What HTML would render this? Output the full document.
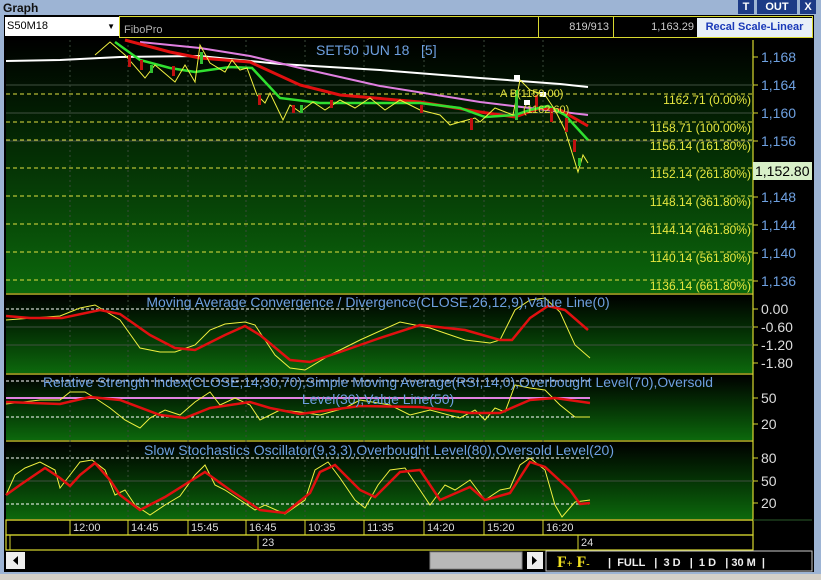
<!DOCTYPE html>
<html><head><meta charset="utf-8"><style>
*{margin:0;padding:0;box-sizing:border-box}
body{width:821px;height:580px;overflow:hidden;background:#d4d0c8;font-family:"Liberation Sans",sans-serif;position:relative}
.abs{position:absolute}
</style></head><body>
<div class="abs" style="left:0;top:0;width:821px;height:574px;background:#9db4d4"></div>
<div class="abs" style="left:3px;top:1px;font-size:12px;font-weight:bold;color:#111">Graph</div>
<div class="abs" style="left:738px;top:0;width:16px;height:14px;background:#1c3a86;color:#fff;font-size:11px;font-weight:bold;text-align:center;line-height:14px">T</div>
<div class="abs" style="left:757px;top:0;width:40px;height:14px;background:#1c3a86;color:#fff;font-size:11px;font-weight:bold;text-align:center;line-height:14px">OUT</div>
<div class="abs" style="left:800px;top:0;width:16px;height:14px;background:#1c3a86;color:#fff;font-size:11px;font-weight:bold;text-align:center;line-height:14px">X</div>
<div class="abs" style="left:4px;top:15px;width:810px;height:557px;background:#000"></div>
<div class="abs" style="left:5px;top:17px;width:114px;height:19px;background:#fff;font-size:11px;line-height:19px;padding-left:2px">S50M18<span style="position:absolute;right:4px;font-size:8px">▼</span></div>
<div class="abs" style="left:119px;top:16px;width:694px;height:22px;border:1px solid #d8d830;background:#000"></div>
<div class="abs" style="left:124px;top:24px;font-size:11px;color:#b0b0b0">FiboPro</div>
<div class="abs" style="left:538px;top:16px;width:75px;height:22px;border-left:1px solid #d8d830;font-size:11px;color:#ccc;text-align:right;padding-right:4px;line-height:22px">819/913</div>
<div class="abs" style="left:613px;top:16px;width:83px;height:22px;border-left:1px solid #d8d830;font-size:11px;color:#ccc;text-align:right;padding-right:2px;line-height:22px">1,163.29</div>
<div class="abs" style="left:697px;top:18px;width:115px;height:19px;background:#e8f0f8;font-size:11px;color:#1a3ab8;font-weight:bold;text-align:center;line-height:19px">Recal Scale-Linear</div>

<svg class="abs" style="left:0;top:0" width="821" height="580" font-family="Liberation Sans, sans-serif">
<defs>
<linearGradient id="g" x1="0" y1="0" x2="0" y2="1"><stop offset="0" stop-color="#000"/><stop offset="0.45" stop-color="#042e04"/><stop offset="1" stop-color="#0c680c"/></linearGradient>
</defs>
<rect x="6" y="40" width="747" height="253" fill="url(#g)"/>
<rect x="6" y="295" width="747" height="78" fill="url(#g)"/>
<rect x="6" y="375" width="747" height="65" fill="url(#g)"/>
<rect x="6" y="442" width="747" height="77" fill="url(#g)"/>
<g stroke="#d8d830" fill="none" stroke-width="1.2">
<line x1="6" y1="294" x2="753" y2="294"/><line x1="6" y1="374" x2="753" y2="374"/><line x1="6" y1="441" x2="753" y2="441"/><line x1="6" y1="520" x2="753" y2="520"/>
<line x1="753" y1="40" x2="753" y2="520"/>
<rect x="6" y="520" width="747" height="15"/><rect x="6" y="535" width="747" height="15"/>
</g>
<g stroke="#d8d830" stroke-width="1">
<line x1="753" y1="57" x2="758" y2="57"/><line x1="753" y1="85" x2="758" y2="85"/><line x1="753" y1="113" x2="758" y2="113"/><line x1="753" y1="141" x2="758" y2="141"/><line x1="753" y1="197" x2="758" y2="197"/><line x1="753" y1="225" x2="758" y2="225"/><line x1="753" y1="253" x2="758" y2="253"/><line x1="753" y1="281" x2="758" y2="281"/>
<line x1="753" y1="309" x2="758" y2="309"/><line x1="753" y1="327" x2="758" y2="327"/><line x1="753" y1="345" x2="758" y2="345"/><line x1="753" y1="363" x2="758" y2="363"/>
<line x1="753" y1="398" x2="758" y2="398"/><line x1="753" y1="424" x2="758" y2="424"/>
<line x1="753" y1="458" x2="758" y2="458"/><line x1="753" y1="481" x2="758" y2="481"/><line x1="753" y1="503" x2="758" y2="503"/>
</g>
<g stroke="#3a4a3a" stroke-dasharray="2,3">
<line x1="70" y1="40" x2="70" y2="519"/><line x1="128" y1="40" x2="128" y2="519"/><line x1="188" y1="40" x2="188" y2="519"/><line x1="246" y1="40" x2="246" y2="519"/><line x1="305" y1="40" x2="305" y2="519"/><line x1="364" y1="40" x2="364" y2="519"/><line x1="424" y1="40" x2="424" y2="519"/><line x1="484" y1="40" x2="484" y2="519"/><line x1="543" y1="40" x2="543" y2="519"/>
</g>
<g stroke="#405040"><line x1="6" y1="85" x2="753" y2="85"/><line x1="6" y1="113" x2="753" y2="113"/><line x1="6" y1="141" x2="753" y2="141"/><line x1="6" y1="327" x2="753" y2="327"/><line x1="6" y1="345" x2="753" y2="345"/><line x1="6" y1="481" x2="753" y2="481"/></g>
<g stroke="#e0e040" stroke-dasharray="4,3">
<line x1="6" y1="94" x2="753" y2="94"/><line x1="6" y1="122" x2="753" y2="122"/><line x1="6" y1="140" x2="753" y2="140"/><line x1="6" y1="168" x2="753" y2="168"/><line x1="6" y1="196" x2="753" y2="196"/><line x1="6" y1="224" x2="753" y2="224"/><line x1="6" y1="252" x2="753" y2="252"/><line x1="6" y1="280" x2="753" y2="280"/>
</g>
<g stroke="#fff" stroke-dasharray="3,2"><line x1="6" y1="309" x2="370" y2="309"/><line x1="6" y1="381" x2="590" y2="381"/><line x1="6" y1="417" x2="590" y2="417"/><line x1="6" y1="458" x2="590" y2="458"/><line x1="6" y1="504" x2="590" y2="504"/></g>
<polyline fill="none" stroke="#fff" stroke-width="2" points="6,61 60,60 120,57 200,56 280,64 380,70 480,78 520,81 560,84 588,87"/>
<polyline fill="none" stroke="#e080e0" stroke-width="2" points="140,42 200,48 250,56 300,68 380,86 480,102 530,108 588,115"/>
<polyline fill="none" stroke="#e01010" stroke-width="3" points="125,40 170,52 200,58 250,62 300,85 340,95 420,102 480,112 515,117 540,108 560,110 588,126"/>
<polyline fill="none" stroke="#30e030" stroke-width="2.5" points="115,42 140,60 170,68 195,72 230,67 252,68 280,98 320,103 420,103 460,108 485,117 515,115 530,110 548,106 565,115 588,140"/>
<polyline fill="none" stroke="#f0f040" stroke-width="1" points="95,55 110,42 125,55 145,78 155,65 175,82 185,65 195,82 200,45 210,63 225,72 232,60 240,70 247,68 257,95 265,103 270,93 283,120 290,105 300,112 313,102 325,110 340,100 355,108 370,98 385,110 400,100 420,110 440,115 450,125 460,122 475,118 480,122 495,108 513,115 520,80 530,90 545,95 555,110 565,130 578,172 583,155 588,163"/>
<g fill="#c01010"><rect x="128" y="55" width="3" height="12"/><rect x="140" y="60" width="3" height="10"/><rect x="172" y="66" width="3" height="10"/><rect x="258" y="95" width="3" height="10"/><rect x="292" y="105" width="3" height="8"/><rect x="330" y="100" width="3" height="8"/><rect x="420" y="105" width="3" height="8"/><rect x="470" y="118" width="3" height="12"/><rect x="535" y="95" width="3" height="12"/><rect x="550" y="108" width="3" height="14"/><rect x="565" y="118" width="3" height="14"/><rect x="573" y="140" width="3" height="12"/></g>
<g fill="#30c030"><rect x="150" y="65" width="3" height="8"/><rect x="200" y="52" width="3" height="12"/><rect x="300" y="105" width="3" height="8"/><rect x="515" y="90" width="3" height="30"/><rect x="578" y="158" width="3" height="8"/></g>
<rect x="514" y="75" width="6" height="5" fill="#fff"/><rect x="524" y="100" width="6" height="5" fill="#fff"/><rect x="540" y="92" width="6" height="5" fill="#fff"/>
<text x="500" y="97" font-size="11" fill="#e0e040">A B(1159.00)</text>
<text x="523" y="113" font-size="11" fill="#e0e040">(1162.60)</text>
<text x="316" y="55" font-size="14" fill="#6ea0e0" style="white-space:pre">SET50 JUN 18   [5]</text>
<g font-size="12" fill="#e8e840" text-anchor="end">
<text x="751" y="104">1162.71 (0.00%)</text><text x="751" y="132">1158.71 (100.00%)</text><text x="751" y="150">1156.14 (161.80%)</text><text x="751" y="178">1152.14 (261.80%)</text><text x="751" y="206">1148.14 (361.80%)</text><text x="751" y="234">1144.14 (461.80%)</text><text x="751" y="262">1140.14 (561.80%)</text><text x="751" y="290">1136.14 (661.80%)</text>
</g>
<g font-size="14" fill="#6ea0e0">
<text x="761" y="62">1,168</text><text x="761" y="90">1,164</text><text x="761" y="118">1,160</text><text x="761" y="146">1,156</text><text x="761" y="202">1,148</text><text x="761" y="230">1,144</text><text x="761" y="258">1,140</text><text x="761" y="286">1,136</text>
</g>
<rect x="753" y="162" width="59" height="18" fill="#d8f0c8"/>
<text x="755" y="176" font-size="14" fill="#000">1,152.80</text>
<polyline fill="none" stroke="#f0f040" stroke-width="1" points="6,320 60,316 80,308 95,305 120,320 140,348 160,352 175,352 195,345 210,330 225,324 245,322 255,325 275,355 290,368 305,370 330,355 360,340 400,322 430,328 465,340 490,343 500,340 515,310 530,300 545,298 560,312 575,345 590,358"/>
<polyline fill="none" stroke="#e01010" stroke-width="2.5" points="6,316 30,318 62,318 100,310 120,314 150,335 175,348 195,350 225,335 245,326 260,335 290,360 310,362 340,352 380,338 420,325 465,330 500,340 512,340 530,318 548,306 565,310 588,330"/>
<text x="378" y="307" font-size="14" fill="#6ea0e0" text-anchor="middle">Moving Average Convergence / Divergence(CLOSE,26,12,9),Value Line(0)</text>
<g font-size="14" fill="#ddd"><text x="761" y="314">0.00</text><text x="761" y="332">-0.60</text><text x="761" y="350">-1.20</text><text x="761" y="368">-1.80</text></g>
<line x1="6" y1="398" x2="590" y2="398" stroke="#e080e0" stroke-width="2"/>
<polyline fill="none" stroke="#f0f040" stroke-width="1" points="6,404 40,400 60,400 70,392 85,392 95,398 110,408 125,420 140,428 150,418 165,410 180,415 195,402 210,392 220,405 235,398 250,405 260,420 280,410 300,412 320,415 345,408 360,400 390,405 410,415 430,410 460,418 475,410 485,420 495,408 505,412 515,385 530,388 545,390 560,405 575,417 590,417"/>
<polyline fill="none" stroke="#e01010" stroke-width="2.5" points="6,402 60,404 90,397 120,400 160,415 185,418 210,408 250,402 270,408 300,414 360,406 420,407 470,413 500,413 530,400 555,398 590,403"/>
<text x="378" y="387" font-size="14" fill="#6ea0e0" text-anchor="middle" textLength="670" lengthAdjust="spacingAndGlyphs">Relative Strength Index(CLOSE,14,30,70),Simple Moving Average(RSI,14,0),Overbought Level(70),Oversold</text>
<text x="378" y="404" font-size="14" fill="#6ea0e0" text-anchor="middle">Level(30),Value Line(50)</text>
<g font-size="14" fill="#ddd"><text x="761" y="403">50</text><text x="761" y="429">20</text></g>
<polyline fill="none" stroke="#f0f040" stroke-width="1" points="6,495 15,475 25,468 40,462 55,470 60,488 70,475 80,462 92,460 105,470 115,495 125,490 135,505 150,515 165,505 180,496 195,475 205,465 215,485 225,490 240,500 255,510 265,505 285,514 305,500 315,470 328,462 340,478 355,500 365,508 378,485 390,470 405,468 420,490 430,505 445,485 455,490 470,480 485,500 500,490 510,488 520,465 530,458 545,470 555,505 562,517 575,502 590,500"/>
<polyline fill="none" stroke="#e01010" stroke-width="2.5" points="6,495 20,485 45,468 60,478 70,486 80,475 95,463 110,480 120,495 140,510 165,497 205,472 230,490 260,510 285,513 310,493 320,472 335,465 360,490 375,497 400,472 420,470 440,500 470,487 485,500 510,493 530,462 545,467 570,490 580,504 590,503"/>
<text x="379" y="455" font-size="14" fill="#6ea0e0" text-anchor="middle">Slow Stochastics Oscillator(9,3,3),Overbought Level(80),Oversold Level(20)</text>
<g font-size="14" fill="#ddd"><text x="761" y="463">80</text><text x="761" y="486">50</text><text x="761" y="508">20</text></g>
<line x1="753" y1="520" x2="812" y2="520" stroke="#2a5a2a"/>
<g stroke="#d8d830"><line x1="70" y1="520" x2="70" y2="535"/><line x1="128" y1="520" x2="128" y2="535"/><line x1="188" y1="520" x2="188" y2="535"/><line x1="246" y1="520" x2="246" y2="535"/><line x1="305" y1="520" x2="305" y2="535"/><line x1="364" y1="520" x2="364" y2="535"/><line x1="424" y1="520" x2="424" y2="535"/><line x1="484" y1="520" x2="484" y2="535"/><line x1="543" y1="520" x2="543" y2="535"/><line x1="10" y1="535" x2="10" y2="550"/><line x1="258" y1="535" x2="258" y2="550"/><line x1="578" y1="535" x2="578" y2="550"/></g>
<g font-size="11" fill="#ddd"><text x="73" y="531">12:00</text><text x="131" y="531">14:45</text><text x="191" y="531">15:45</text><text x="249" y="531">16:45</text><text x="308" y="531">10:35</text><text x="367" y="531">11:35</text><text x="427" y="531">14:20</text><text x="487" y="531">15:20</text><text x="546" y="531">16:20</text><text x="262" y="546">23</text><text x="581" y="546">24</text></g>
<rect x="6" y="552" width="19" height="17" fill="#eee"/><path d="M18,556 L13,560.5 L18,565Z" fill="#000"/>
<rect x="430" y="552" width="92" height="17" fill="#b8b8b8" stroke="#888"/>
<rect x="527" y="552" width="16" height="17" fill="#eee"/><path d="M532,556 L537,560.5 L532,565Z" fill="#000"/>
<rect x="546" y="551" width="266" height="20" fill="#000" stroke="#ccc"/>
<text x="557" y="567" font-size="16" font-weight="bold" fill="#f0e020" font-family="Liberation Serif,serif">F<tspan font-size="10">+</tspan> F<tspan font-size="10">-</tspan></text>
<g font-size="11" font-weight="bold" fill="#eee"><text x="608" y="566" style="white-space:pre">|  FULL   |  3 D   |  1 D   | 30 M  |</text></g>
</svg>
</body></html>
